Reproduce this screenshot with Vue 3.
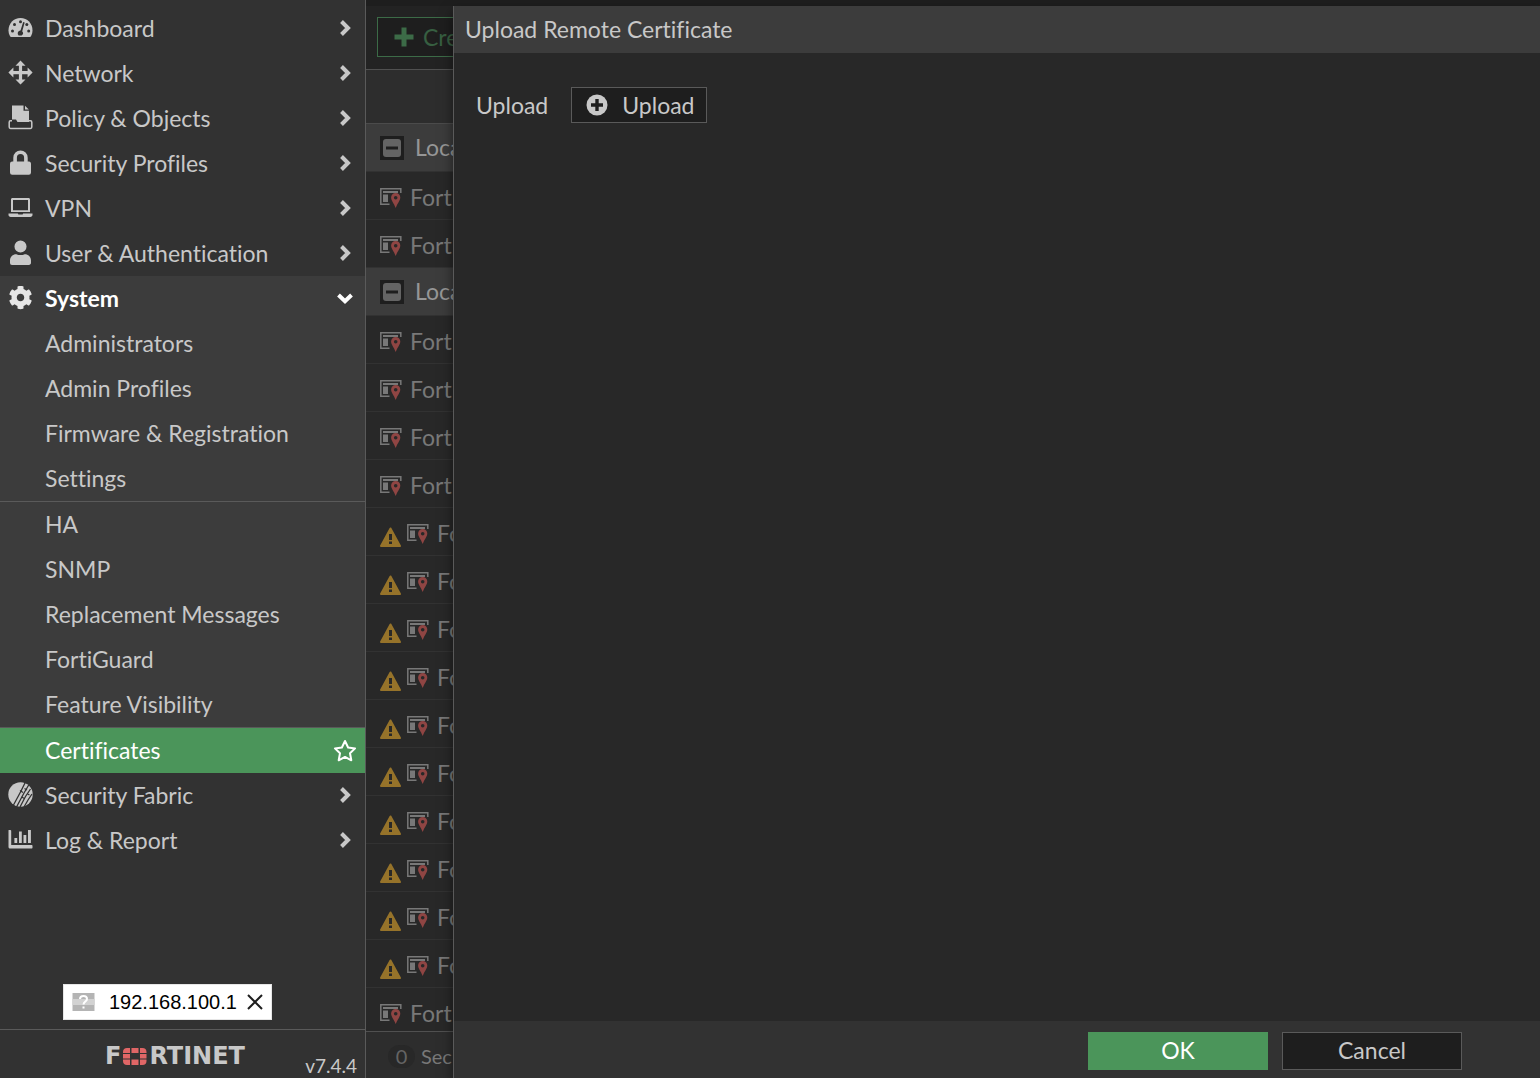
<script setup>
const topItems = [
  { label: 'Dashboard', icon: 'dashboard' },
  { label: 'Network', icon: 'network' },
  { label: 'Policy & Objects', icon: 'policy' },
  { label: 'Security Profiles', icon: 'lock' },
  { label: 'VPN', icon: 'laptop' },
  { label: 'User & Authentication', icon: 'user' },
  {
    label: 'System',
    icon: 'gear',
    open: true,
    children: [
      { label: 'Administrators' },
      { label: 'Admin Profiles' },
      { label: 'Firmware & Registration' },
      { label: 'Settings' },
      { label: 'HA', divided: true },
      { label: 'SNMP' },
      { label: 'Replacement Messages' },
      { label: 'FortiGuard' },
      { label: 'Feature Visibility' },
      { label: 'Certificates', divided: true, current: true },
    ],
  },
  { label: 'Security Fabric', icon: 'fabric' },
  { label: 'Log & Report', icon: 'chart' },
]

const plain = (n) => Array.from({ length: n }, () => ({ label: 'Fort' }))
const warned = (n) => Array.from({ length: n }, () => ({ label: 'Fo', warning: true }))

const certificateRows = [
  { group: true, label: 'Loca' },
  ...plain(2),
  { group: true, label: 'Loca' },
  ...plain(4),
  ...warned(10),
  ...plain(1),
]
</script>

<template>
  <div class="page">
    <aside class="sidebar">
      <nav class="nav" aria-label="Main">
        <ul class="menu">
          <li v-for="item in topItems" :key="item.label" :class="{ open: item.open }">
            <a href="#" class="item">
              <svg class="item-icon" viewBox="0 0 25 25" aria-hidden="true">
                <template v-if="item.icon === 'dashboard'">
                  <path d="M12.500 3C5.600 3 .5 8.500 .5 15.200c0 2.300.6 4.400 1.700 6.300.2.300.5.500.9.500h18.800c.4 0 .7-.2.9-.5 1.100-1.900 1.700-4 1.700-6.300C24.500 8.500 19.400 3 12.500 3z" />
                  <g class="knock">
                    <circle cx="4.500" cy="16" r="1.500" />
                    <circle cx="6.500" cy="9.500" r="1.500" />
                    <circle cx="12.500" cy="6.700" r="1.500" />
                    <circle cx="18.800" cy="9.500" r="1.500" />
                    <circle cx="20.700" cy="16" r="1.500" />
                    <path d="M15.200 7l1.500.5-2.500 8.700a2.900 2.900 0 0 1-.6 4.300h-3a2.900 2.900 0 0 1 1.900-5z" />
                  </g>
                </template>
                <path v-else-if="item.icon === 'network'" d="M12.500.5l5 5.200h-3.400v5.300h5.500V7.600l5 5-5 5v-3.400h-5.500v5.400h3.400l-5 5-5-5h3.400v-5.400H5.400v3.400l-5-5 5-5V11h5.500V5.700H7.500z" />
                <template v-else-if="item.icon === 'policy'">
                  <path d="M4 .5h11.500v5.200H21V17H9.500L8 14.500H4z" />
                  <path d="M17 .8l3.800 3.800H17z" />
                  <path class="line" d="M4 15.800H2.500c-.8 0-1.300.6-1.300 1.400v4.900c0 .8.500 1.300 1.300 1.300h20c.8 0 1.300-.5 1.300-1.300v-4.900c0-.8-.5-1.400-1.300-1.400H21" />
                </template>
                <path v-else-if="item.icon === 'lock'" d="M21 11.500h-1.300V7.700a7.200 7.200 0 0 0-14.400 0v3.800H4.200a2.200 2.200 0 0 0-2.200 2.200v8.800a2.200 2.200 0 0 0 2.200 2.200h16.600a2.200 2.200 0 0 0 2.200-2.200v-8.800c0-1.200-.9-2.200-2-2.200zM16.100 11.500H8.900V7.700a3.600 3.600 0 0 1 7.200 0z" />
                <path v-else-if="item.icon === 'laptop'" fill-rule="evenodd" d="M4.500 3h16c.9 0 1.500.6 1.500 1.500V17H3V4.500C3 3.600 3.600 3 4.500 3zM5 5v10.200h15V5zM.5 18.500h9.300l.6 1h4.200l.6-1h9.300v1.300c0 1.300-.9 2.200-2.200 2.200H2.700C1.400 22 .5 21.100 .5 19.800z" />
                <path v-else-if="item.icon === 'user'" d="M12.500.5a6 6 0 1 1 0 12.100 6 6 0 0 1 0-12.100zM8.300 14.200c2.700 1.200 5.700 1.200 8.400 0 3.600 0 6.300 2.700 6.300 6.200v2.300c0 1.300-.9 2.200-2.200 2.200H4.200A2.100 2.100 0 0 1 2 22.700v-2.300c0-3.500 2.700-6.200 6.300-6.200z" />
                <path v-else-if="item.icon === 'gear'" transform="translate(.5 .5) scale(.0469)" d="M487.400 315.700l-42.600-24.600c4.300-23.200 4.300-47 0-70.200l42.600-24.600c4.900-2.800 7.100-8.600 5.500-14-11.100-35.600-30-67.800-54.700-94.600-3.800-4.100-10-5.100-14.800-2.300L380.800 110c-17.900-15.400-38.500-27.300-60.800-35.100V25.800c0-5.600-3.900-10.500-9.400-11.700-36.700-8.200-74.300-7.800-109.200 0-5.500 1.200-9.400 6.100-9.400 11.700V75c-22.200 7.900-42.800 19.800-60.800 35.100L88.700 85.500c-4.900-2.800-11-1.900-14.800 2.300-24.700 26.700-43.600 58.900-54.700 94.600-1.700 5.400.6 11.200 5.500 14L67.300 221c-4.300 23.200-4.300 47 0 70.200l-42.600 24.600c-4.900 2.800-7.100 8.600-5.500 14 11.100 35.600 30 67.800 54.700 94.600 3.800 4.100 10 5.100 14.800 2.300l42.600-24.600c17.900 15.400 38.500 27.300 60.800 35.100v49.200c0 5.600 3.900 10.500 9.400 11.700 36.700 8.200 74.300 7.800 109.200 0 5.500-1.200 9.400-6.100 9.400-11.700v-49.200c22.200-7.900 42.800-19.800 60.800-35.100l42.600 24.600c4.900 2.800 11 1.900 14.800-2.300 24.700-26.700 43.600-58.900 54.700-94.600 1.500-5.500-.7-11.300-5.600-14.100zM256 336c-44.100 0-80-35.900-80-80s35.900-80 80-80 80 35.900 80 80-35.900 80-80 80z" />
                <template v-else-if="item.icon === 'fabric'">
                  <circle cx="12.500" cy="12.500" r="12.200" />
                  <g class="cut">
                    <path d="M17.500 0L12.500 10 5.500 23" />
                    <path d="M21 2.500L16 11 8.500 25" />
                    <path d="M22.500 7L17.500 14.500 12 25" />
                    <path d="M24 12L20 18 16 25" />
                    <path d="M12 8.500l3 2M16.500 6.500l2.500 1.500M13.500 15l3 1.500M19.500 12l2 1" />
                  </g>
                </template>
                <path v-else d="M.5 3.500C.5 3 .8 3 1.500 3h.7c.7 0 1 .3 1 .8V18h20.300c.7 0 1 .3 1 1v1.500c0 .7-.3 1-1 1H2c-.9 0-1.500-.6-1.500-1.500zM6.400 11h2.800v5H6.400zM11 4.500h2.800V16H11zM15.500 8h2.800v8h-2.800zM20 3h2.900v13H20z" />
              </svg>
              <span class="item-label">{{ item.label }}</span>
              <svg class="chevron" viewBox="0 0 16 16" aria-hidden="true">
                <path v-if="item.open" d="M1.500 5L8 11.200 14.500 5" />
                <path v-else d="M4.500 1.500L11 8l-6.500 6.500" />
              </svg>
            </a>
            <ul v-if="item.children" class="menu">
              <li v-for="child in item.children" :key="child.label" :class="{ divided: child.divided }">
                <a href="#" class="item child" :class="{ current: child.current }">
                  <span class="item-label">{{ child.label }}</span>
                  <svg v-if="child.current" class="star" viewBox="0 0 24 24" aria-hidden="true">
                    <path d="M12 2l3.100 6.500 7 .9-5.100 4.900 1.300 7L12 17.900l-6.300 3.400 1.300-7L1.900 9.400l7-.9z" />
                  </svg>
                </a>
              </li>
            </ul>
          </li>
        </ul>
      </nav>

      <div class="host">
        <svg class="host-icon" viewBox="0 0 22 18" aria-hidden="true">
          <path fill="#b4b4b4" d="M0 0h22v18H0z" />
          <path fill="#d2d2d2" d="M0 6h22v6H0z" />
          <path fill="none" stroke="#ffffff" stroke-width="2" d="M7.500 6c0-2 1.500-3 3.500-3s3.500 1 3.500 3c0 2.500-3.500 2.700-3.500 5.500M11 13.500v2" />
        </svg>
        <span>192.168.100.1</span>
        <button type="button" class="host-close" aria-label="Close">
          <svg viewBox="0 0 16 16" aria-hidden="true"><path d="M1 1l14 14M15 1L1 15" /></svg>
        </button>
      </div>

      <footer class="sidebar-footer">
        <div class="logo">
          <span>F</span>
          <svg viewBox="0 0 24 17" aria-hidden="true">
            <path d="M7 0v5H0V4c0-2.500 1.500-4 4-4zM8.500 0h7v5h-7zM17 0h2.500c2.500 0 4 1.500 4 4v1H17zM0 6h7v4.500H0zM17 6h6.500v4.500H17zM0 11.500h7V17H4c-2.500 0-4-1.500-4-4zM8.500 11.500h7V17h-7zM17 11.500h6.500V13c0 2.500-1.500 4-4 4H17z" />
          </svg>
          <span>RTINET</span>
        </div>
        <span class="version">v7.4.4</span>
      </footer>
    </aside>

    <main class="main">
      <div class="topbar"></div>
      <div class="toolbar">
        <button type="button" class="create">
          <svg viewBox="0 0 20 20" aria-hidden="true"><path d="M7.500.5h5v7h7v5h-7v7h-5v-7h-7v-5h7z" /></svg>
          <span>Cre</span>
        </button>
      </div>
      <div class="list">
        <table class="certs">
          <thead>
            <tr><th></th></tr>
          </thead>
          <tbody>
            <tr v-for="(row, i) in certificateRows" :key="i" :class="{ group: row.group }">
              <td>
                <div v-if="row.group" class="cell">
                  <svg class="toggle" viewBox="0 0 24 24" aria-hidden="true">
                    <path fill="#1e1e1e" d="M0 0h24v24H0z" />
                    <rect x="3" y="3" width="18" height="18" rx="3" fill="#646464" />
                    <path fill="#1e1e1e" d="M6 10.500h12v3H6z" />
                  </svg>
                  <span class="group-label">{{ row.label }}</span>
                </div>
                <div v-else class="cell entry">
                  <svg v-if="row.warning" class="warning" viewBox="0 0 22 20" aria-hidden="true">
                    <path fill="#96732a" stroke="#96732a" stroke-width="2" stroke-linejoin="round" d="M10.500 1.500L20 19H1z" />
                    <path fill="#282828" d="M9 7h3v6H9zM9 14.500h3V17H9z" />
                  </svg>
                  <svg class="cert" viewBox="0 0 22 21" aria-hidden="true">
                    <path fill="none" stroke="#787878" stroke-width="1.500" d="M9.500 16.200H.8V.8h20V5" />
                    <path fill="#787878" d="M3 3h15v2H3zM3 6.500h5v7.500H3z" />
                    <path fill="#8f4543" fill-rule="evenodd" d="M15.700 5a4.600 4.600 0 0 1 4.600 4.600c0 3-2.600 5.400-4.600 10.400-2-5-4.600-7.400-4.600-10.400A4.600 4.600 0 0 1 15.700 5zm0 2.900a1.800 1.800 0 1 0 0 3.600 1.800 1.800 0 0 0 0-3.600z" />
                  </svg>
                  <span>{{ row.label }}</span>
                </div>
              </td>
            </tr>
          </tbody>
        </table>
      </div>
      <div class="list-footer">
        <span class="count">0</span>
        <span>Sec</span>
      </div>

      <section class="panel" aria-labelledby="panel-title">
        <h1 id="panel-title" class="panel-title">Upload Remote Certificate</h1>
        <div class="panel-body">
          <div class="field">
            <label for="upload">Upload</label>
            <button id="upload" type="button" class="upload">
              <svg viewBox="0 0 22 22" aria-hidden="true">
                <circle cx="11" cy="11" r="10.500" />
                <path d="M9.300 5h3.400v4.300H17v3.400h-4.300V17H9.300v-4.300H5V9.300h4.300z" />
              </svg>
              <span>Upload</span>
            </button>
          </div>
        </div>
        <div class="panel-actions">
          <button type="button" class="action primary">OK</button>
          <button type="button" class="action">Cancel</button>
        </div>
      </section>
    </main>
  </div>
</template>

<style>
body {
  margin: 0;
  background: #282828;
}
</style>

<style scoped>
* {
  box-sizing: border-box;
}

.page {
  display: flex;
  height: 100vh;
  overflow: hidden;
  font-family: Lato, sans-serif;
  font-size: 23px;
  font-variant-ligatures: none;
  line-height: 28px;
  color: #c8c8c8;
}

button {
  padding: 0;
  font: inherit;
  color: inherit;
}

svg {
  display: block;
  flex: none;
}

.sidebar {
  display: flex;
  flex-direction: column;
  flex: none;
  width: 366px;
  background: #323232;
  border-right: 1px solid #5a5a5a;
}

.nav {
  flex: 1;
  min-height: 0;
  padding-top: 6px;
}

.menu {
  margin: 0;
  padding: 0;
  list-style: none;
}

.open {
  background: #3c3c3c;
}

.divided {
  border-top: 1px solid #5a5a5a;
}

.item {
  display: flex;
  align-items: center;
  height: 45px;
  padding: 0 12px 0 8px;
  color: #c8c8c8;
  text-decoration: none;
}

.item-label {
  flex: 1;
  margin-bottom: 2px;
}

.item-icon {
  width: 25px;
  height: 25px;
  margin: 0 12px 2px 0;
  fill: #c8c8c8;
}

.knock {
  fill: #323232;
}

.line {
  fill: none;
  stroke: #c8c8c8;
  stroke-width: 1.5;
}

.cut {
  fill: none;
  stroke: #323232;
  stroke-width: 1.3;
}

.chevron {
  width: 16px;
  height: 16px;
  margin-bottom: 1px;
  fill: none;
  stroke: #c8c8c8;
  stroke-width: 4;
}

.open > .item {
  font-weight: 700;
  color: #ffffff;
}

.open > .item .item-icon {
  fill: #e6e6e6;
}

.open > .item .chevron {
  stroke: #ffffff;
}

.child {
  padding: 0 8px 0 45px;
}

.item.current {
  color: #ffffff;
  background: #4b955a;
}

.star {
  width: 24px;
  height: 24px;
  fill: none;
  stroke: #ffffff;
  stroke-width: 2;
  stroke-linejoin: round;
}

.host {
  display: flex;
  align-items: center;
  align-self: flex-start;
  height: 36px;
  margin: 0 0 9px 63px;
  padding: 0 8px 0 8px;
  border: 1px solid #e6e6e6;
  background: #ffffff;
  color: #000000;
  font-family: "Liberation Sans", Arial, sans-serif;
  font-size: 20px;
}

.host-icon {
  width: 23px;
  height: 18px;
  margin-right: 14px;
}

.host-close {
  margin-left: 10px;
  border: 0;
  background: none;
}

.host-close svg {
  width: 16px;
  height: 16px;
  fill: none;
  stroke: #1e1e1e;
  stroke-width: 2;
}

.sidebar-footer {
  display: flex;
  align-items: flex-end;
  justify-content: space-between;
  height: 49px;
  padding: 0 8px 0 105px;
  border-top: 1px solid #5a5a5a;
}

.logo {
  display: flex;
  align-items: center;
  gap: 2px;
  margin-bottom: 8px;
  font-family: "DejaVu Sans", sans-serif;
  font-weight: 700;
  font-size: 24px;
}

.logo svg {
  width: 24px;
  height: 17px;
  fill: #e06666;
}

.version {
  margin-bottom: -2px;
  font-size: 19px;
}

.main {
  position: relative;
  display: flex;
  flex-direction: column;
  flex: 1;
  min-width: 0;
  background: #282828;
  overflow: hidden;
}

.topbar {
  height: 6px;
  background: #1e1e1e;
}

.toolbar {
  height: 64px;
  padding: 11px;
  background: #232323;
  border-bottom: 1px solid #505050;
}

.create {
  display: flex;
  align-items: center;
  gap: 9px;
  height: 40px;
  padding: 0 16px;
  border: 1px solid #3c6b47;
  background: #1e1e1e;
  color: #375f41;
}

.create svg {
  width: 20px;
  height: 20px;
  fill: #3c6b47;
}

.list {
  flex: 1;
  min-height: 0;
  overflow: hidden;
}

.certs {
  width: 100%;
  border-spacing: 0;
  color: #787878;
}

.certs th {
  height: 54px;
  padding: 0;
  background: #2d2d2d;
  border-bottom: 1px solid #4b4b4b;
}

.certs td {
  height: 48px;
  padding: 0 14px;
  border-bottom: 1px solid #323232;
}

.certs .group td {
  background: #3c3c3c;
  color: #969696;
}

.cell {
  display: flex;
  align-items: center;
  gap: 11px;
}

.group-label {
  margin-bottom: 1px;
}

.entry {
  gap: 8px;
  padding-top: 2px;
}

.toggle {
  width: 24px;
  height: 24px;
}

.warning {
  width: 22px;
  height: 20px;
  margin: 8px -3px 0 0;
}

.cert {
  width: 22px;
  height: 21px;
  margin-top: 4px;
}

.list-footer {
  display: flex;
  align-items: center;
  gap: 6px;
  height: 47px;
  padding: 2px 22px 0;
  border-top: 1px solid #505050;
  background: #2d2d2d;
  color: #787878;
  font-size: 20px;
}

.count {
  width: 27px;
  border-radius: 12px;
  line-height: 23px;
  text-align: center;
  background: #282828;
  color: #646464;
}

.panel {
  position: absolute;
  top: 6px;
  right: 0;
  bottom: 0;
  left: 87px;
  display: flex;
  flex-direction: column;
  border-left: 1px solid #5a5a5a;
  background: #282828;
  box-shadow: 0 6px 12px rgba(0, 0, 0, 0.5);
}

.panel-title {
  margin: 0;
  padding: 0 11px;
  background: #3c3c3c;
  font-size: 23px;
  font-weight: 400;
  line-height: 47px;
}

.panel-body {
  flex: 1;
  padding: 34px 22px;
}

.field {
  display: flex;
  align-items: center;
  gap: 23px;
}

.upload {
  display: flex;
  align-items: center;
  gap: 14px;
  height: 36px;
  padding: 0 11px 0 14px;
  border: 1px solid #5a5a5a;
  background: #1e1e1e;
}

.upload svg {
  width: 22px;
  height: 22px;
  fill: #c8c8c8;
}

.upload path {
  fill: #1e1e1e;
}

.panel-actions {
  display: flex;
  justify-content: flex-end;
  gap: 14px;
  height: 57px;
  padding: 11px 78px 8px 0;
  background: #323232;
}

.action {
  width: 180px;
  padding-bottom: 2px;
  border: 1px solid #5a5a5a;
  background: #1e1e1e;
}

.primary {
  border-color: #4b955a;
  background: #4b955a;
  color: #ffffff;
}
</style>
